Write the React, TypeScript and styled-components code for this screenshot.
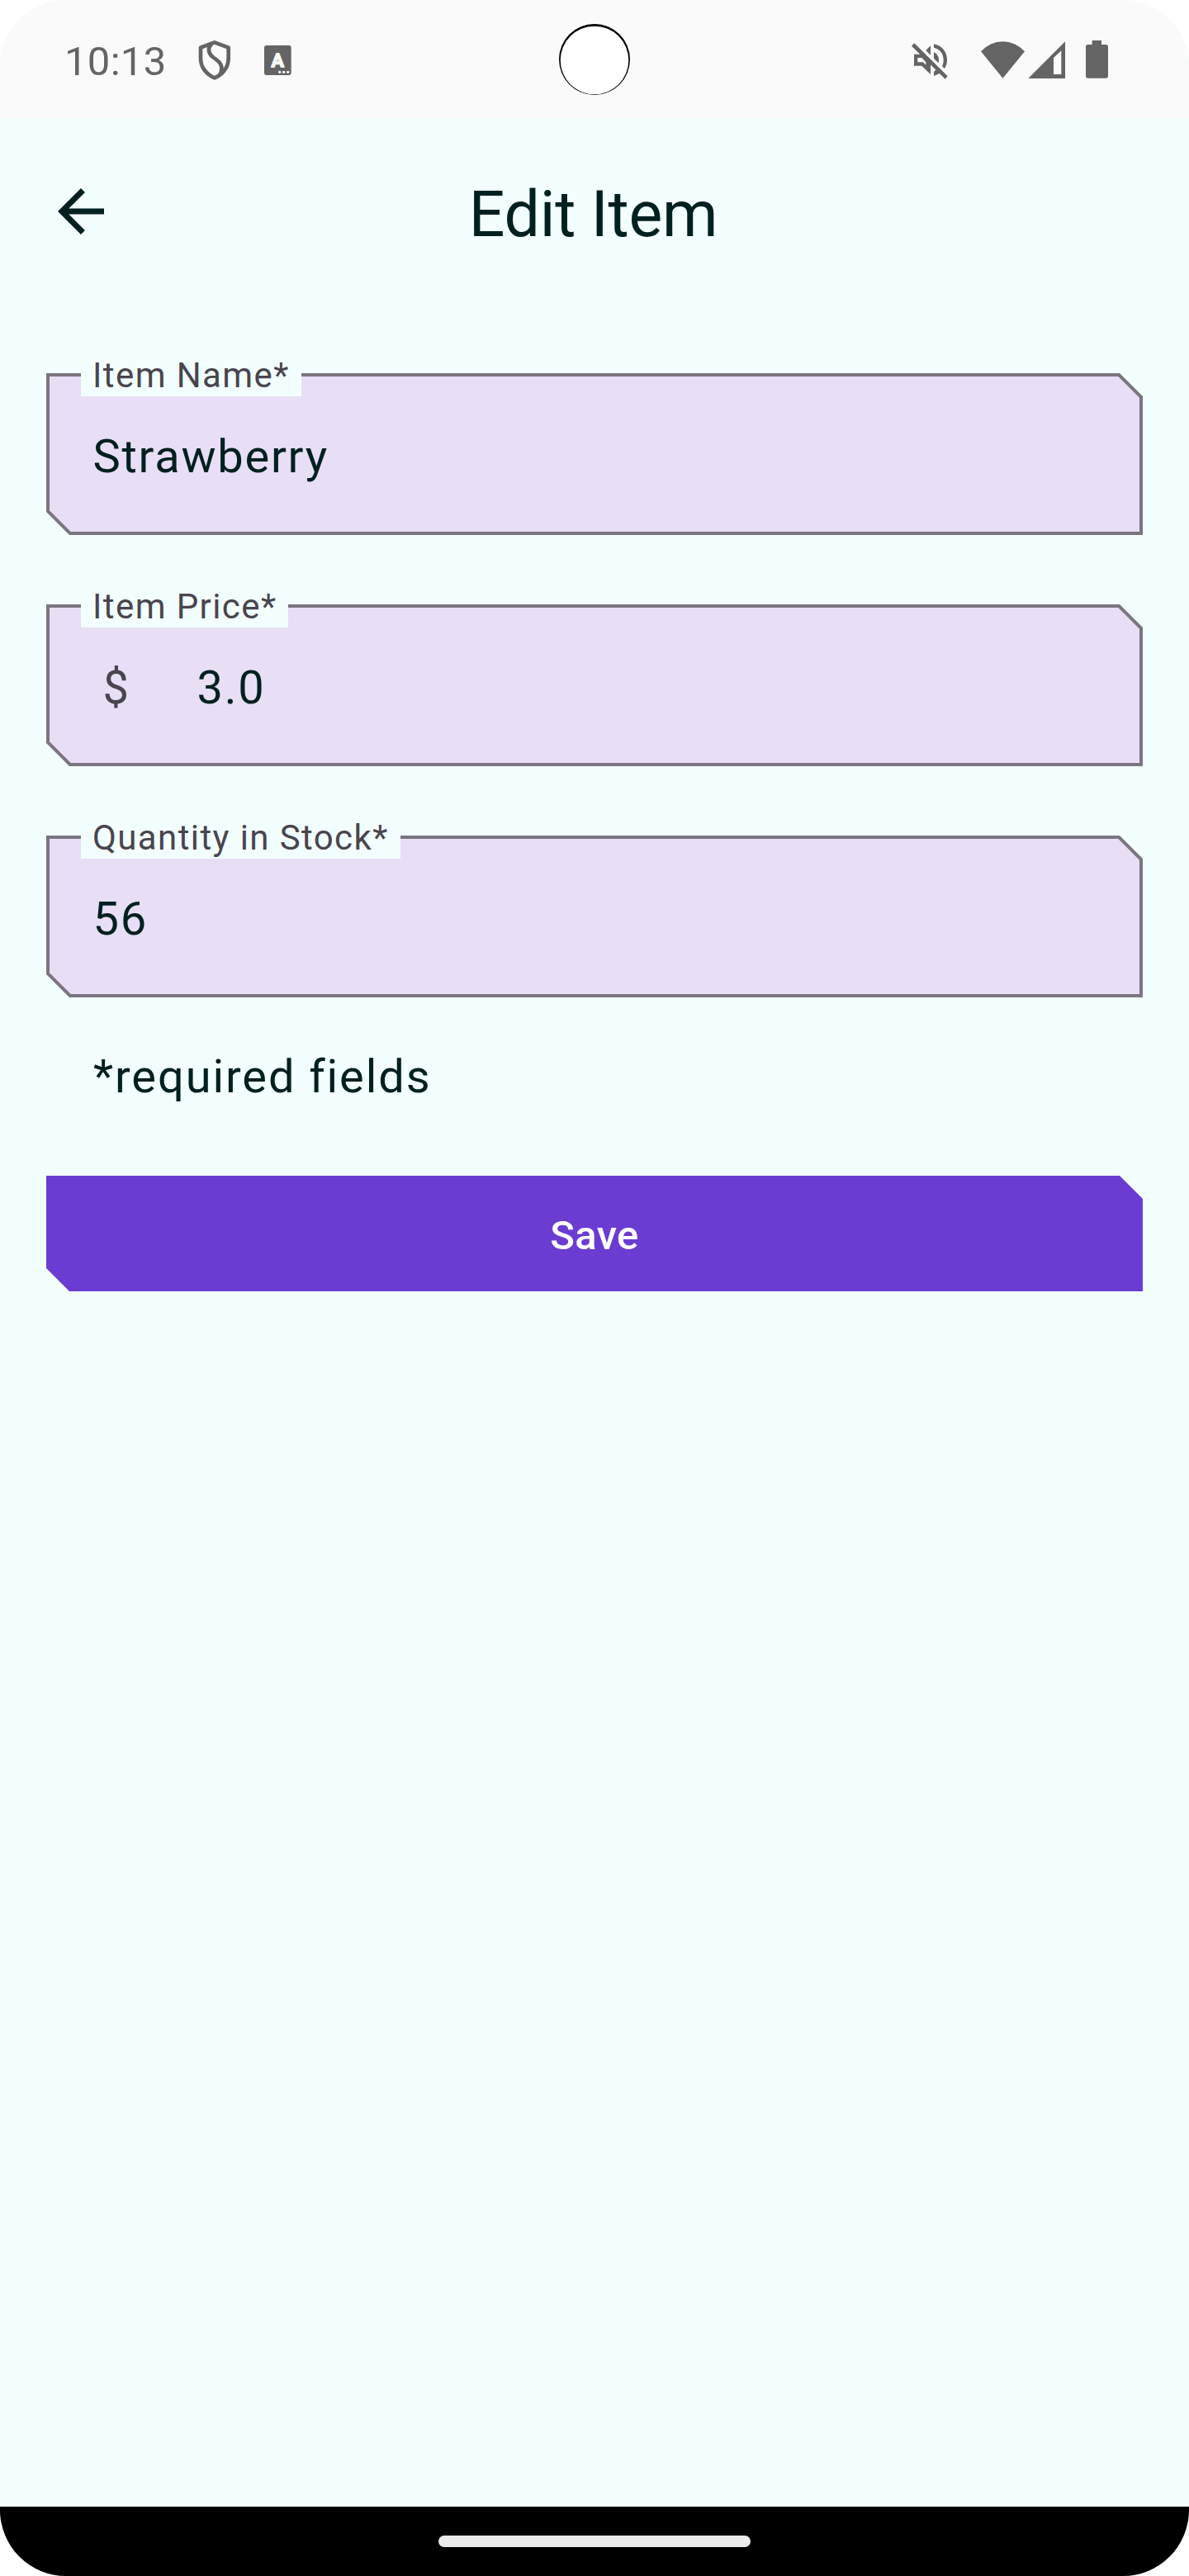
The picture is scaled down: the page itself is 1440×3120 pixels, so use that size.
import React from 'react';
import styled, { createGlobalStyle } from 'styled-components';

const color = {
  statusBar: '#fafafa',
  statusIcon: '#646464',
  background: '#f3fffe',
  ink: '#002020',
  label: '#49454e',
  outline: '#7b757f',
  field: '#e8def6',
  primary: '#6b3cd2',
};

const GlobalStyle = createGlobalStyle`
  html, body { margin: 0; padding: 0; background: #ffffff; }
  * { box-sizing: border-box; }
`;

const Screen = styled.div`
  width: 1440px;
  height: 3120px;
  display: flex;
  flex-direction: column;
  overflow: hidden;
  border-radius: 80px;
  background: ${color.background};
  color: ${color.ink};
  font-family: Roboto, 'Liberation Sans', sans-serif;
`;

const StatusBar = styled.header`
  position: relative;
  display: flex;
  justify-content: space-between;
  align-items: center;
  height: 144px;
  flex: none;
  padding: 4px 98px 0 78px;
  background: ${color.statusBar};
  color: ${color.statusIcon};
`;

const StatusGroup = styled.div`
  display: flex;
  align-items: center;
`;

const Clock = styled.span`
  width: 162px;
  padding-top: 2px;
  font-size: 49px;
  line-height: 60px;
  letter-spacing: 0.3px;
  white-space: nowrap;
`;

const Glyph = styled.svg<{ $w: number; $gap?: number }>`
  display: block;
  flex: none;
  width: ${(p) => p.$w}px;
  height: 60px;
  margin-left: ${(p) => p.$gap ?? 0}px;
`;

const Camera = styled.svg`
  position: absolute;
  top: 28px;
  left: 676px;
  width: 88px;
  height: 88px;
`;

const AppBar = styled.div`
  display: grid;
  grid-template-columns: 84px 1fr 84px;
  align-items: center;
  flex: none;
  height: 224px;
  padding: 0 56px;
`;

const BackIcon = styled.svg`
  display: block;
  width: 84px;
  height: 84px;
`;

const Title = styled.h1`
  margin: 0;
  padding: 8px 3px 0 0;
  font-size: 77px;
  line-height: 98px;
  font-weight: 400;
  letter-spacing: -0.3px;
  text-align: center;
`;

const Form = styled.main`
  display: flex;
  flex-direction: column;
  flex: 1;
  padding: 84px 56px 0;
`;

const Fields = styled.div`
  display: flex;
  flex-direction: column;
  gap: 84px;
`;

const Field = styled.div`
  position: relative;
  height: 196px;
`;

const Frame = styled.div`
  height: 100%;
  padding: 4px;
  background: ${color.outline};
  clip-path: polygon(0 0, calc(100% - 28px) 0, 100% 28px, 100% 100%, 28px 100%, 0 calc(100% - 28px));
`;

const FrameBody = styled.div`
  display: flex;
  align-items: center;
  height: 100%;
  padding: 6px 52px 0 52.5px;
  background: ${color.field};
  clip-path: polygon(
    0 0,
    calc(100% - 25.66px) 0,
    100% 25.66px,
    100% 100%,
    25.66px 100%,
    0 calc(100% - 25.66px)
  );
`;

const FieldLabel = styled.label`
  position: absolute;
  top: -28px;
  left: 42px;
  height: 56px;
  padding: 5px 14px 0;
  background: ${color.background};
  color: ${color.label};
  font-size: 42px;
  line-height: 51px;
  letter-spacing: 1.4px;
  white-space: nowrap;
`;

const Body = styled.span`
  font-size: 56px;
  line-height: 84px;
  letter-spacing: 1.75px;
`;

const Prefix = styled(Body)`
  width: 126px;
  padding-left: 12px;
  color: ${color.label};
`;

const Note = styled(Body)`
  margin: 54px 0 0 57px;
  letter-spacing: 1.9px;
`;

const SaveButton = styled.button`
  height: 140px;
  margin: 78px 0 0;
  padding: 5px 0 0;
  border: 0;
  background: ${color.primary};
  color: #ffffff;
  font-family: inherit;
  font-size: 49px;
  font-weight: 500;
  line-height: 70px;
  letter-spacing: 0.35px;
  clip-path: polygon(0 0, calc(100% - 28px) 0, 100% 28px, 100% 100%, 28px 100%, 0 calc(100% - 28px));
`;

const NavBar = styled.footer`
  display: flex;
  justify-content: center;
  align-items: center;
  flex: none;
  height: 84px;
  background: #000000;
`;

const NavHandle = styled.div`
  width: 378px;
  height: 14px;
  border-radius: 7px;
  background: #ebebeb;
`;

const ShieldIcon = () => (
  <Glyph $w={40} viewBox="24 0 120 180" fill="none" stroke="currentColor" strokeWidth={14}>
    <path
      strokeLinejoin="round"
      d="M83.500 22L33 41V80C33 112 54 139 83.500 151C113 139 134 112 134 80V41Z"
    />
    <path d="M73 27C58 42 60 62 77 75L93 87C110 100 114 116 104 138" />
  </Glyph>
);

const KeyboardIcon = () => (
  <Glyph $w={33} $gap={40} viewBox="264 0 99 180">
    <rect x="264" y="33" width="98" height="108" rx="9" fill="currentColor" />
    <text
      x="313"
      y="111"
      textAnchor="middle"
      fontFamily="Roboto"
      fontWeight="500"
      fontSize="68"
      fill="#fafafa"
      stroke="#fafafa"
      strokeWidth="6"
      strokeLinejoin="round"
    >
      A
    </text>
    <g fill="#fafafa">
      <circle cx="320" cy="130" r="5" />
      <circle cx="335" cy="130" r="5" />
      <circle cx="350" cy="130" r="5" />
    </g>
  </Glyph>
);

const MutedIcon = () => (
  <Glyph $w={60} viewBox="0 0 180 180" fill="currentColor">
    <path d="M18 35L28 25L149 145L140 155Z" />
    <path fillRule="evenodd" d="M27 65H54L87 98V138L55 107H27ZM40 78V94H60L70 104V94L55 78Z" />
    <path d="M87 34V68L70 51Z" />
    <path d="M99 28C127 33 147 56 147 85C147 97 144 108 138 117L129 109C133 102 134 94 134 85C134 62 120 46 99 41Z" />
    <path d="M99 58C110 63 117 74 117 86L116 97L99 81Z" />
    <path d="M99 128L106 122L122 132C115 137 107 142 99 143Z" />
  </Glyph>
);

const WifiIcon = () => (
  <Glyph $w={53} $gap={30} viewBox="384 132 159 180" fill="currentColor">
    <path d="M384 187A106 106 0 0 1 543 187L463.500 284Z" />
  </Glyph>
);

const SignalIcon = () => (
  <Glyph $w={45} $gap={4} viewBox="555 132 135 180" fill="currentColor">
    <path fillRule="evenodd" d="M556 285L690 151V285ZM648 210V270H676V184Z" />
  </Glyph>
);

const BatteryIcon = () => (
  <Glyph $w={27} $gap={25} viewBox="765 132 81 180" fill="currentColor">
    <path d="M788 147H822V162H838Q846 162 846 170V276Q846 284 838 284H773Q765 284 765 276V170Q765 162 773 162H788Z" />
  </Glyph>
);

interface TextFieldProps {
  label: string;
  value: string;
  prefix?: string;
}

const TextField = ({ label, value, prefix }: TextFieldProps) => (
  <Field>
    <Frame>
      <FrameBody>
        {prefix && <Prefix>{prefix}</Prefix>}
        <Body>{value}</Body>
      </FrameBody>
    </Frame>
    <FieldLabel>{label}</FieldLabel>
  </Field>
);

export default function App() {
  return (
    <>
      <GlobalStyle />
      <Screen>
        <StatusBar>
          <StatusGroup>
            <Clock>10:13</Clock>
            <ShieldIcon />
            <KeyboardIcon />
          </StatusGroup>
          <Camera viewBox="0 0 88 88">
            <circle cx="44" cy="44" r="43" fill="#000000" />
            <circle cx="44" cy="45" r="41.3" fill="#ffffff" />
          </Camera>
          <StatusGroup>
            <MutedIcon />
            <WifiIcon />
            <SignalIcon />
            <BatteryIcon />
          </StatusGroup>
        </StatusBar>
        <AppBar>
          <BackIcon viewBox="0 0 24 24" fill="currentColor">
            <path d="M20 11H7.830l5.590-5.590L12 4l-8 8 8 8 1.410-1.410L7.830 13H20v-2z" />
          </BackIcon>
          <Title>Edit Item</Title>
        </AppBar>
        <Form>
          <Fields>
            <TextField label="Item Name*" value="Strawberry" />
            <TextField label="Item Price*" value="3.0" prefix="$" />
            <TextField label="Quantity in Stock*" value="56" />
          </Fields>
          <Note>*required fields</Note>
          <SaveButton>Save</SaveButton>
        </Form>
        <NavBar>
          <NavHandle />
        </NavBar>
      </Screen>
    </>
  );
}
